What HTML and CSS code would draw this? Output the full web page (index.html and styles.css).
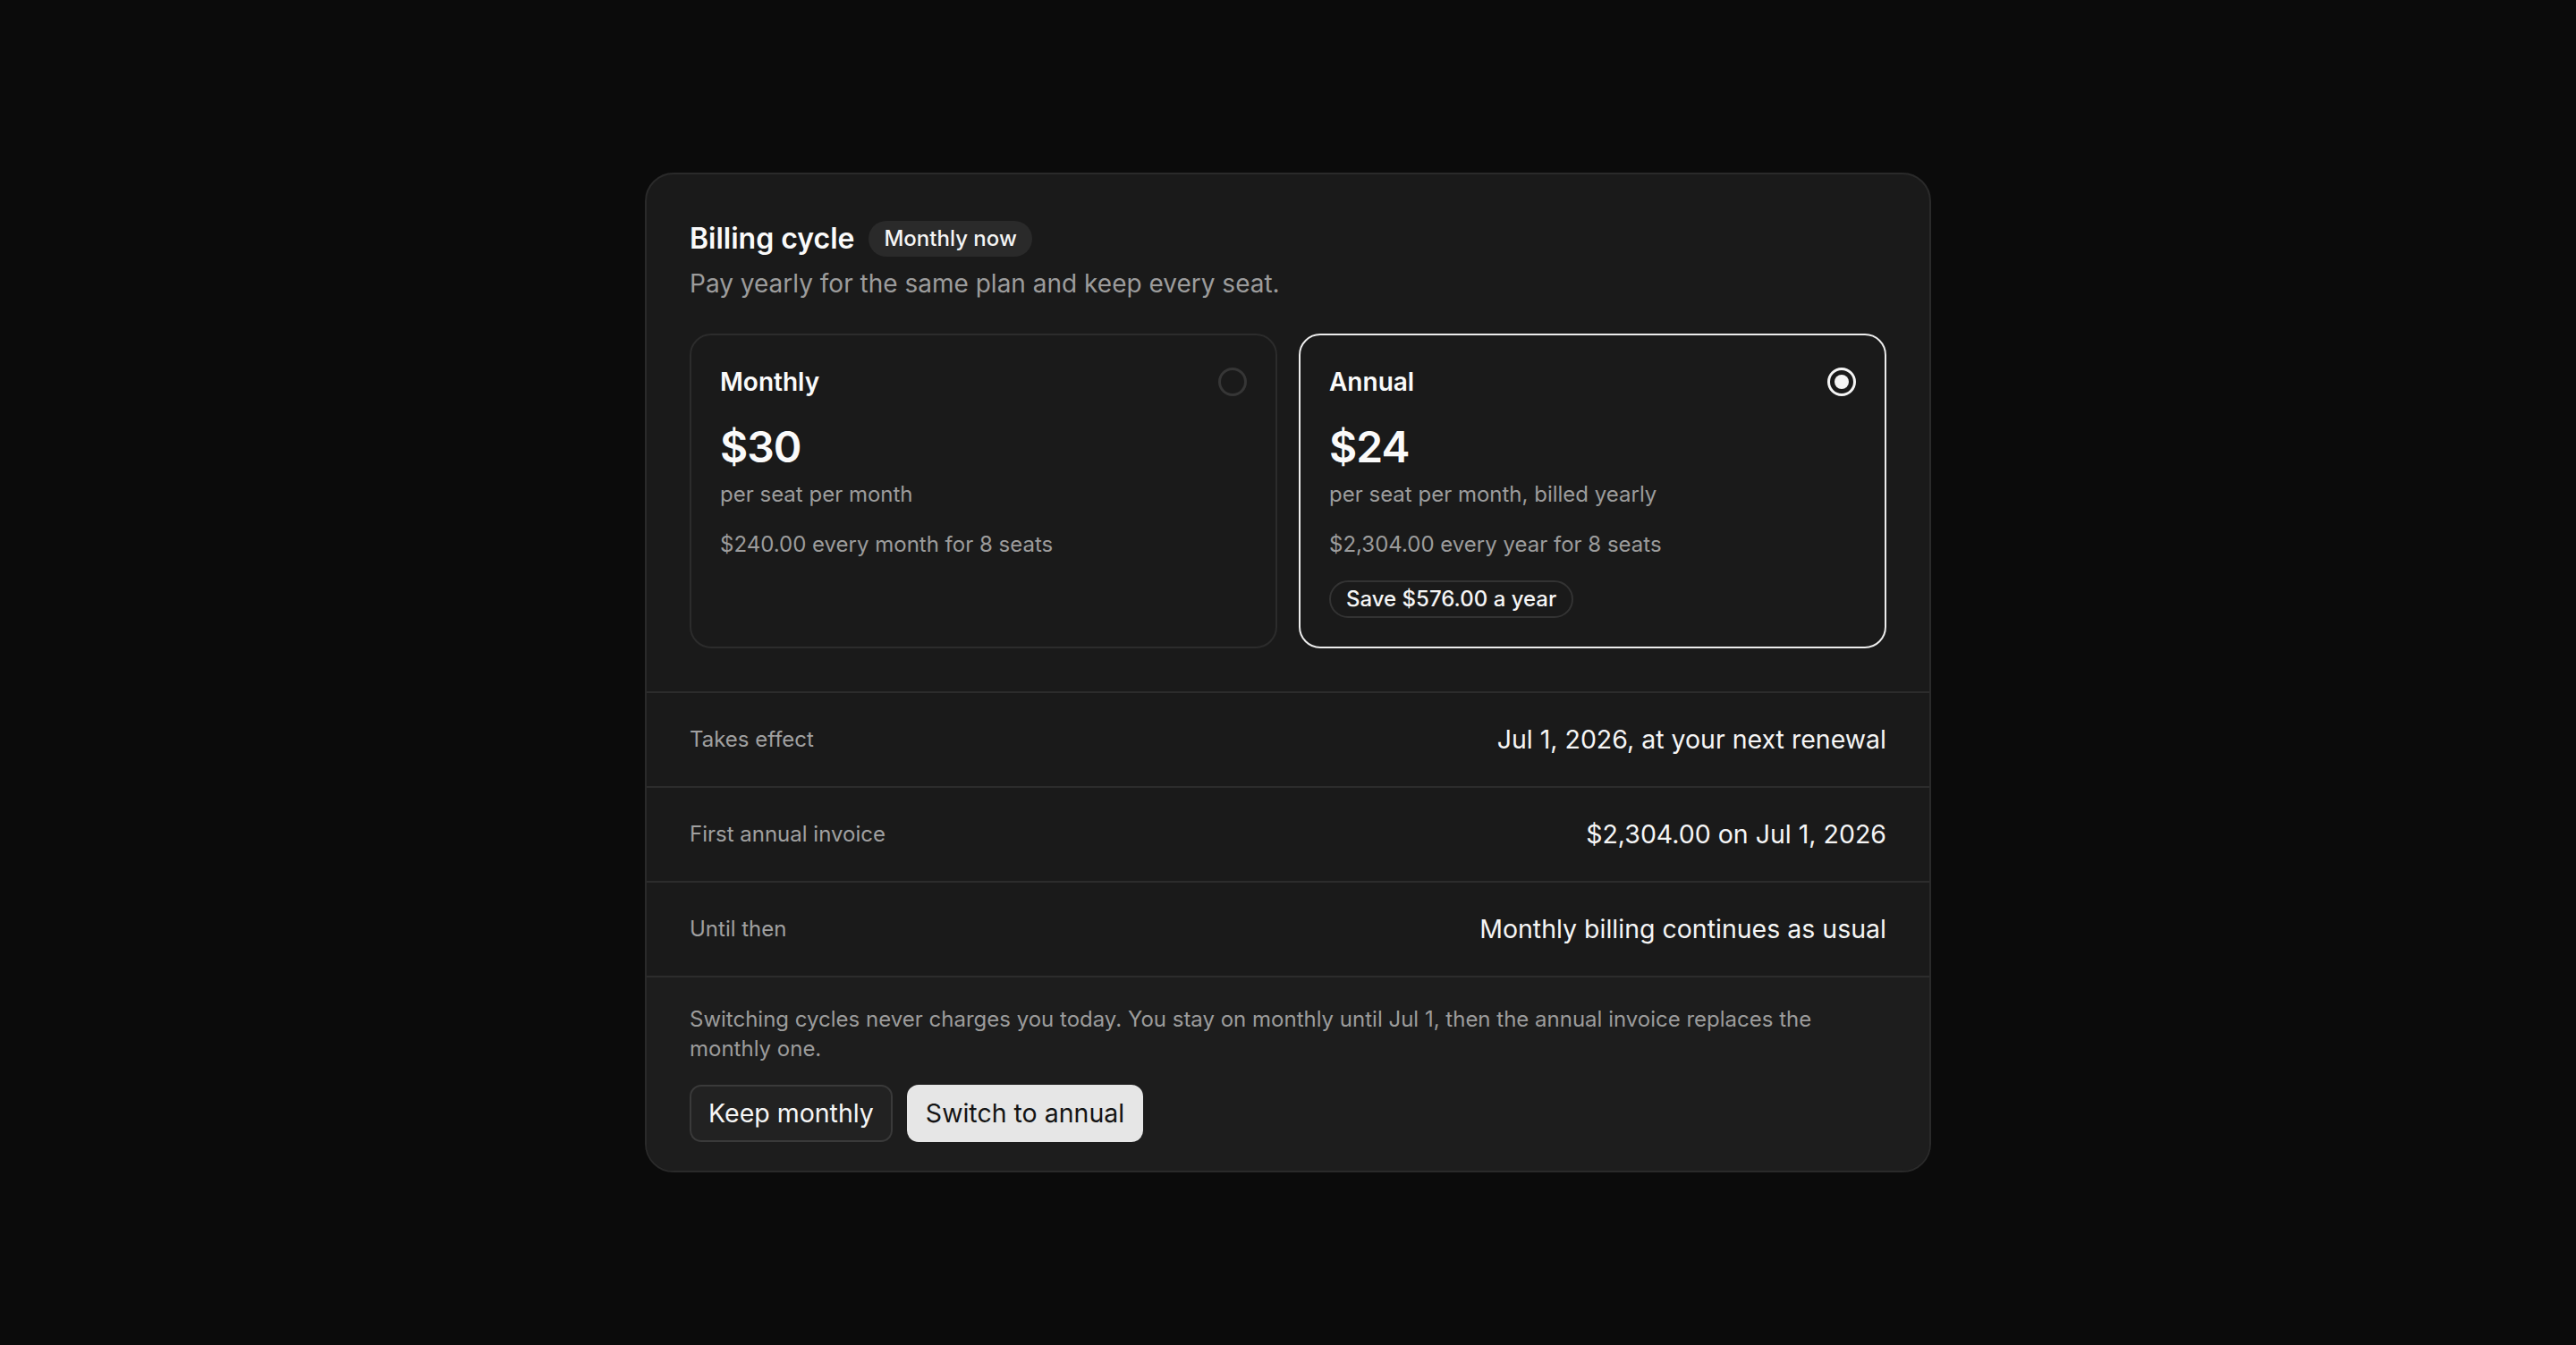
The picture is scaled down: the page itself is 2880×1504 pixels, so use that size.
FILE: index.html
```html
<!DOCTYPE html>
<html lang="en">
<head>
    <meta charset="UTF-8">
    <meta name="viewport" content="width=device-width, initial-scale=1.0">
    <title>Billing cycle</title>
    <link rel="stylesheet" href="styles.css">
</head>
<body>
    <div class="panel">
        <div class="panel-head">
            <div class="title-row">
                <h1>Billing cycle</h1>
                <span class="pill">Monthly now</span>
            </div>
            <p class="subtitle">Pay yearly for the same plan and keep every seat.</p>

            <div class="options">
                <div class="option">
                    <div class="option-top">
                        <span class="option-name">Monthly</span>
                        <span class="radio"></span>
                    </div>
                    <div class="price">$30</div>
                    <div class="unit">per seat per month</div>
                    <div class="total">$240.00 every month for 8 seats</div>
                </div>

                <div class="option selected">
                    <div class="option-top">
                        <span class="option-name">Annual</span>
                        <span class="radio checked"></span>
                    </div>
                    <div class="price">$24</div>
                    <div class="unit">per seat per month, billed yearly</div>
                    <div class="total">$2,304.00 every year for 8 seats</div>
                    <span class="save">Save $576.00 a year</span>
                </div>
            </div>
        </div>

        <div class="detail-row">
            <span class="detail-label">Takes effect</span>
            <span class="detail-value">Jul 1, 2026, at your next renewal</span>
        </div>
        <div class="detail-row">
            <span class="detail-label">First annual invoice</span>
            <span class="detail-value">$2,304.00 on Jul 1, 2026</span>
        </div>
        <div class="detail-row">
            <span class="detail-label">Until then</span>
            <span class="detail-value">Monthly billing continues as usual</span>
        </div>

        <div class="panel-foot">
            <p class="note">Switching cycles never charges you today. You stay on monthly until Jul 1, then the annual invoice replaces the monthly one.</p>
            <div class="actions">
                <button class="btn btn-secondary">Keep monthly</button>
                <button class="btn btn-primary">Switch to annual</button>
            </div>
        </div>
    </div>
</body>
</html>
```

FILE: styles.css
```css
* {
    box-sizing: border-box;
}
body {
    margin: 0;
    min-height: 100vh;
    display: flex;
    align-items: center;
    justify-content: center;
    background-color: #0b0b0b;
    font-family: Inter, "Noto Sans", sans-serif;
    color: #f2f2f2;
}
.panel {
    width: 1438px;
    background-color: #1a1a1a;
    border: 2px solid #2a2a2a;
    border-radius: 32px;
    overflow: hidden;
}
.panel-head {
    padding: 48px;
    border-bottom: 2px solid #2c2c2c;
}
.title-row {
    display: flex;
    align-items: center;
    gap: 16px;
}
h1 {
    margin: 0;
    font-size: 32px;
    line-height: 48px;
    font-weight: 600;
    color: #fafafa;
}
.pill {
    background-color: #2a2a2a;
    border-radius: 999px;
    padding: 4px 17px;
    font-size: 24px;
    line-height: 32px;
    font-weight: 500;
    color: #f5f5f5;
}
.subtitle {
    margin: 4px 0 0;
    font-size: 28px;
    line-height: 44px;
    color: #9c9c9c;
}
.options {
    display: grid;
    grid-template-columns: 1fr 1fr;
    gap: 24px;
    margin-top: 34px;
}
.option {
    border: 2px solid #2c2c2c;
    border-radius: 24px;
    padding: 32px;
    display: flex;
    flex-direction: column;
    align-items: flex-start;
}
.option.selected {
    border-color: #ececec;
}
.option-top {
    width: 100%;
    display: flex;
    justify-content: space-between;
    align-items: center;
}
.option-name {
    font-size: 28px;
    line-height: 40px;
    font-weight: 600;
    color: #fafafa;
}
.radio {
    width: 32px;
    height: 32px;
    border-radius: 50%;
    border: 3px solid #363636;
    display: flex;
    align-items: center;
    justify-content: center;
}
.radio.checked {
    border-color: #f5f5f5;
}
.radio.checked::after {
    content: "";
    width: 16px;
    height: 16px;
    border-radius: 50%;
    background-color: #f5f5f5;
}
.price {
    margin-top: 18px;
    font-size: 48px;
    line-height: 70px;
    font-weight: 600;
    letter-spacing: -0.02em;
    color: #fafafa;
}
.unit {
    font-size: 24px;
    line-height: 36px;
    color: #9c9c9c;
}
.total {
    margin-top: 20px;
    font-size: 24px;
    line-height: 36px;
    color: #9c9c9c;
}
.save {
    margin-top: 22px;
    border: 2px solid #333333;
    border-radius: 999px;
    padding: 1px 17px;
    font-size: 24px;
    line-height: 36px;
    font-weight: 500;
    color: #f5f5f5;
}
.detail-row {
    display: flex;
    justify-content: space-between;
    align-items: center;
    padding: 32px 48px;
    border-bottom: 2px solid #2c2c2c;
}
.detail-label {
    font-size: 24px;
    line-height: 40px;
    color: #a0a0a0;
}
.detail-value {
    font-size: 28.5px;
    line-height: 40px;
    color: #f5f5f5;
}
.panel-foot {
    background-color: #1d1d1d;
    padding: 30px 48px 32px;
}
.note {
    margin: 0;
    max-width: 1300px;
    font-size: 24px;
    line-height: 33px;
    color: #9c9c9c;
}
.actions {
    display: flex;
    gap: 16px;
    margin-top: 24px;
}
.btn {
    font-family: inherit;
    font-size: 28.5px;
    line-height: 40px;
    padding: 10px 19px;
    border-radius: 13px;
    cursor: pointer;
}
.btn-secondary {
    background-color: #222222;
    border: 2px solid #3a3a3a;
    color: #f5f5f5;
}
.btn-primary {
    background-color: #e6e6e6;
    border: 2px solid #e6e6e6;
    color: #141414;
}
```
